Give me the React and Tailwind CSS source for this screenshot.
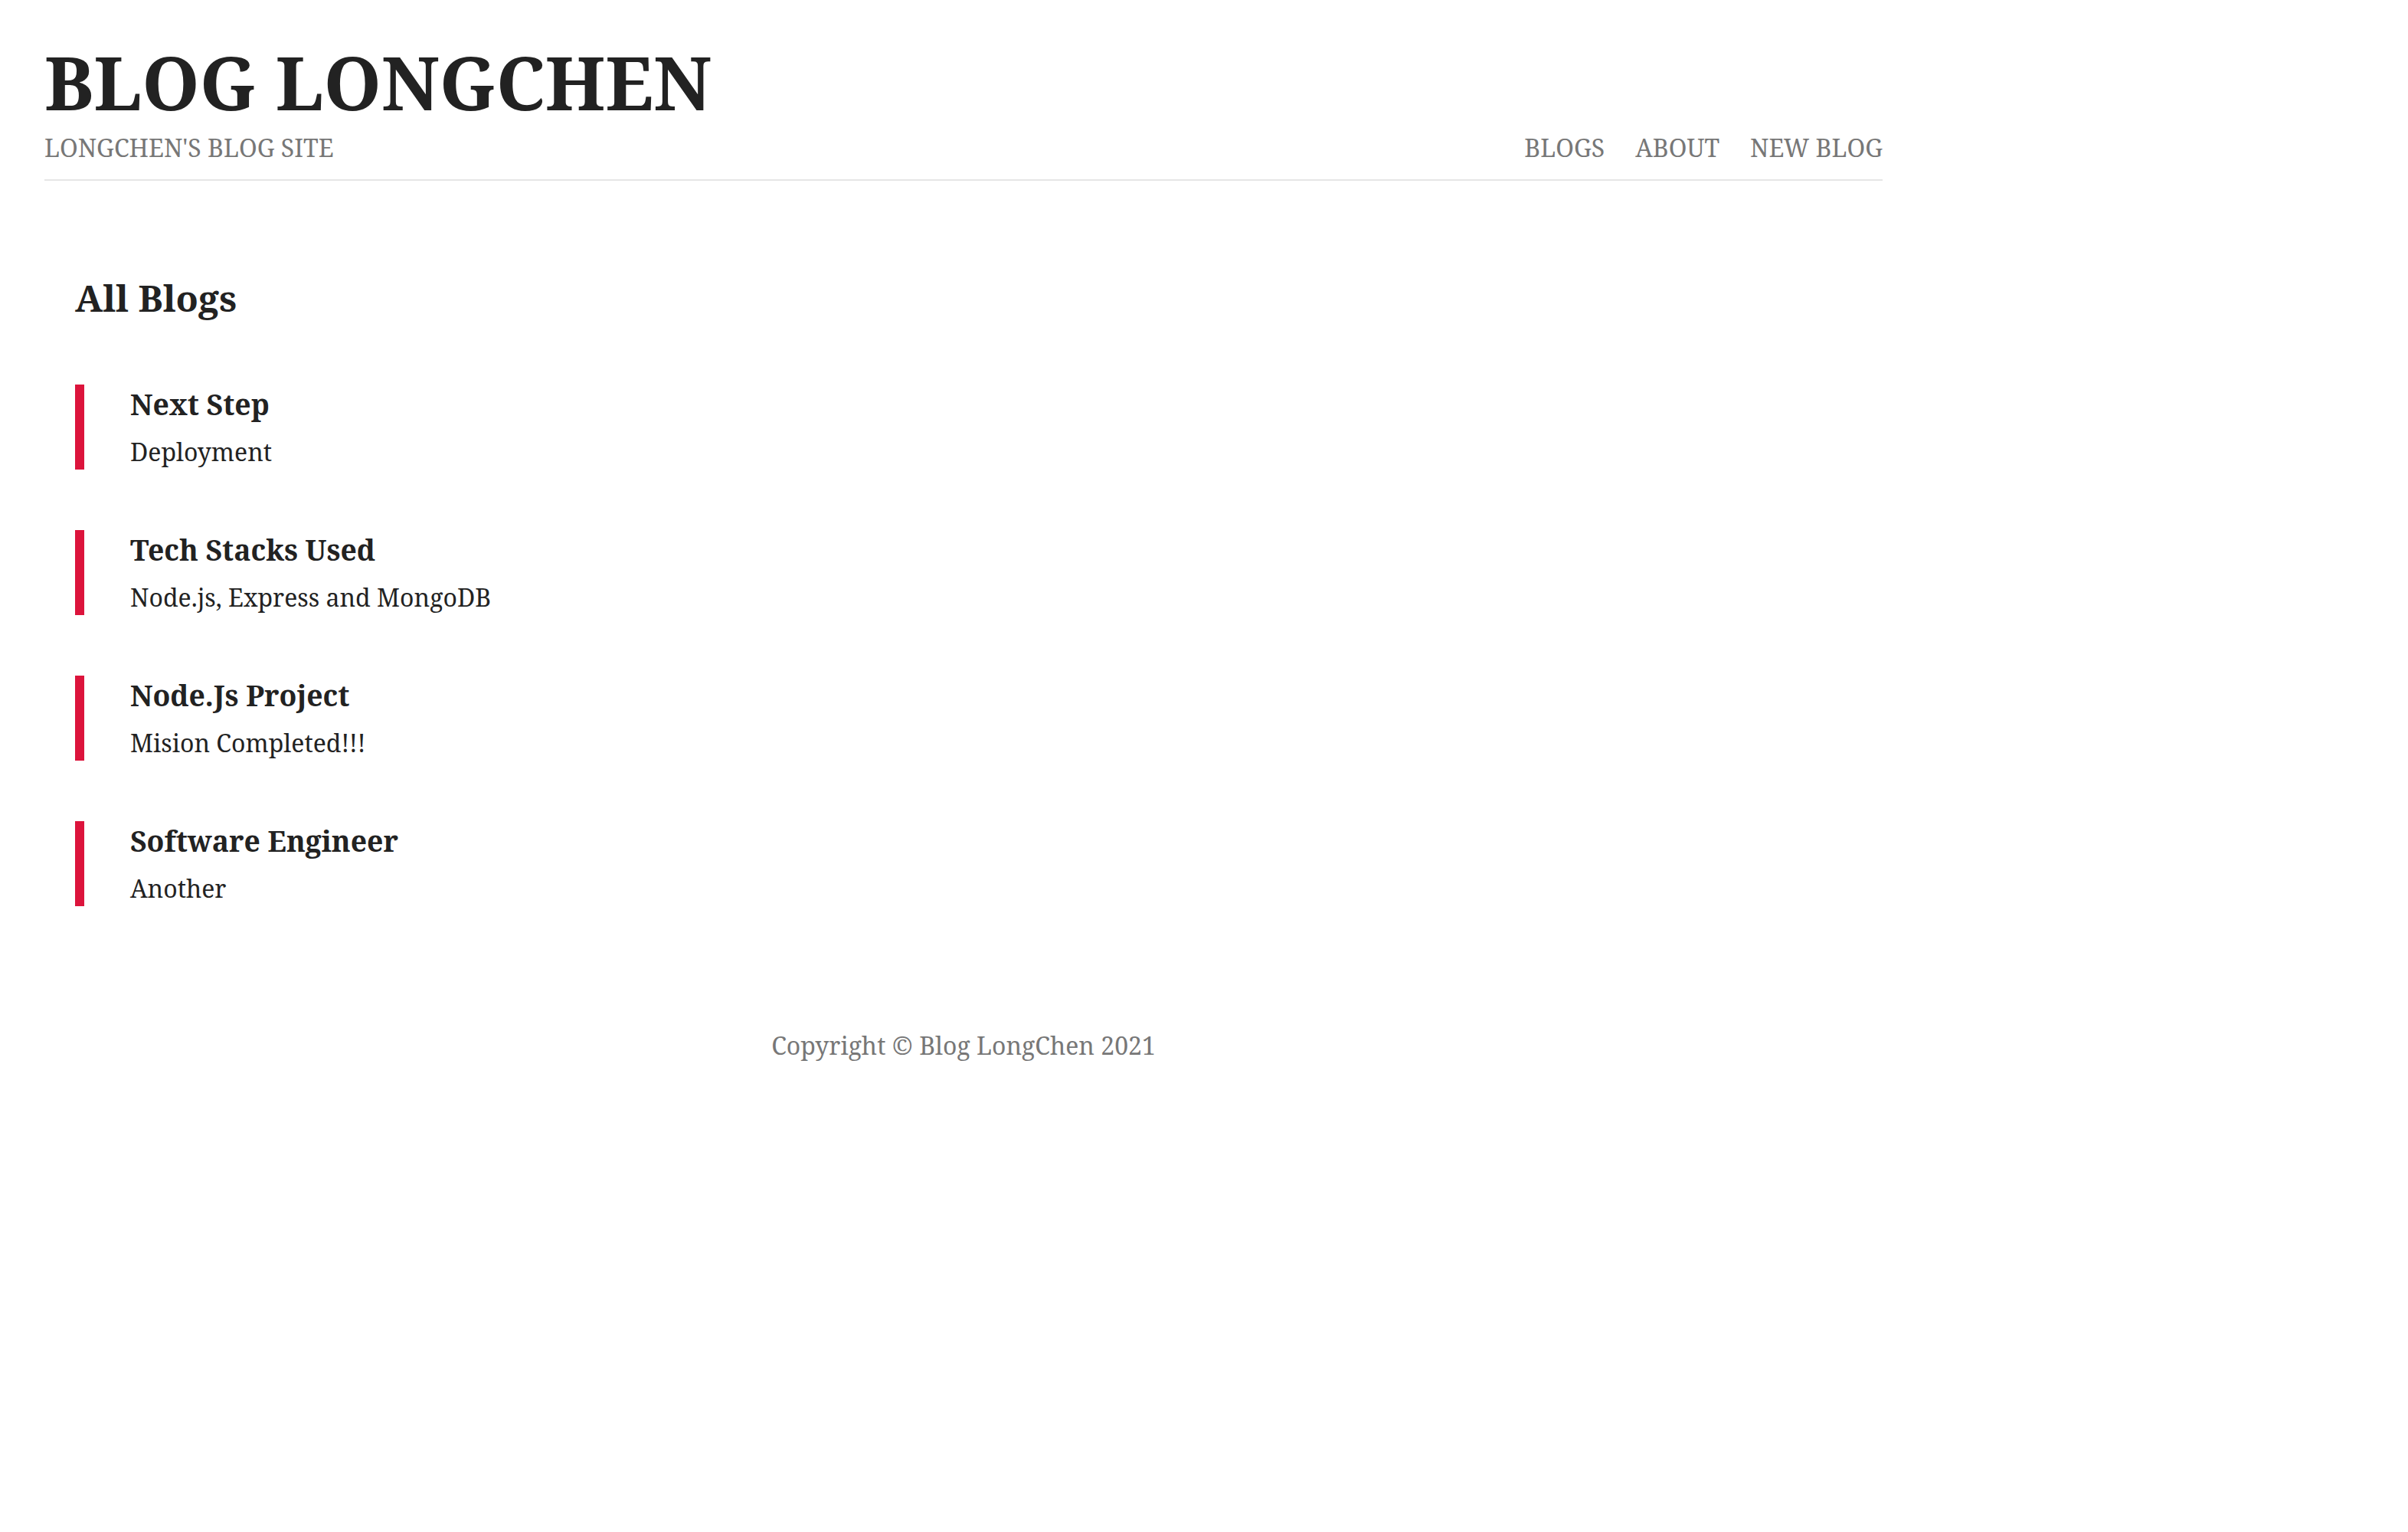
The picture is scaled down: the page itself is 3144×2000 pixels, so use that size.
const blogs = [
  { id: 1, title: "Next Step", snippet: "Deployment" },
  { id: 2, title: "Tech Stacks Used", snippet: "Node.js, Express and MongoDB" },
  { id: 3, title: "Node.Js Project", snippet: "Mision Completed!!!" },
  { id: 4, title: "Software Engineer", snippet: "Another" },
];

const Navbar = () => {
  return (
    <nav className="border-b-2 border-[#e6e6e6] pb-[21px]">
      <h1 className="pt-[59px] text-[96px] leading-[96px] font-bold text-[#222]">
        BLOG LONGCHEN
      </h1>
      <div className="mt-[18px] flex items-baseline justify-between text-[32px] leading-[40px] text-[#777]">
        <p>LONGCHEN'S BLOG SITE</p>
        <div className="flex gap-[40px]">
          <a href="#">BLOGS</a>
          <a href="#">ABOUT</a>
          <a href="#">NEW BLOG</a>
        </div>
      </div>
    </nav>
  );
};

const BlogList = ({ blogs }) => {
  return (
    <div className="pl-[40px]">
      <h2 className="mt-[125px] text-[48px] leading-[56px] font-bold text-[#222]">
        All Blogs
      </h2>
      <div className="mt-[85px] flex flex-col gap-[79px]">
        {blogs.map((blog) => (
          <a
            key={blog.id}
            href="#"
            className="block border-l-[12px] border-[#dc143c] pl-[60px] pt-[4px] pb-[3px] text-[#222]"
          >
            <h3 className="text-[37.3px] leading-[44px] font-bold">{blog.title}</h3>
            <p className="mt-[20px] text-[32px] leading-[40px]">{blog.snippet}</p>
          </a>
        ))}
      </div>
    </div>
  );
};

export default function App() {
  return (
    <div
      className="min-h-[2000px] bg-white"
      style={{ fontFamily: '"Noto Serif", "DejaVu Serif", serif' }}
    >
      <div className="ml-[58px] w-[2400px]">
        <Navbar />
        <BlogList blogs={blogs} />
        <footer className="mt-[162px] text-center text-[32px] leading-[40px] text-[#777]">
          Copyright © Blog LongChen 2021
        </footer>
      </div>
    </div>
  );
}
